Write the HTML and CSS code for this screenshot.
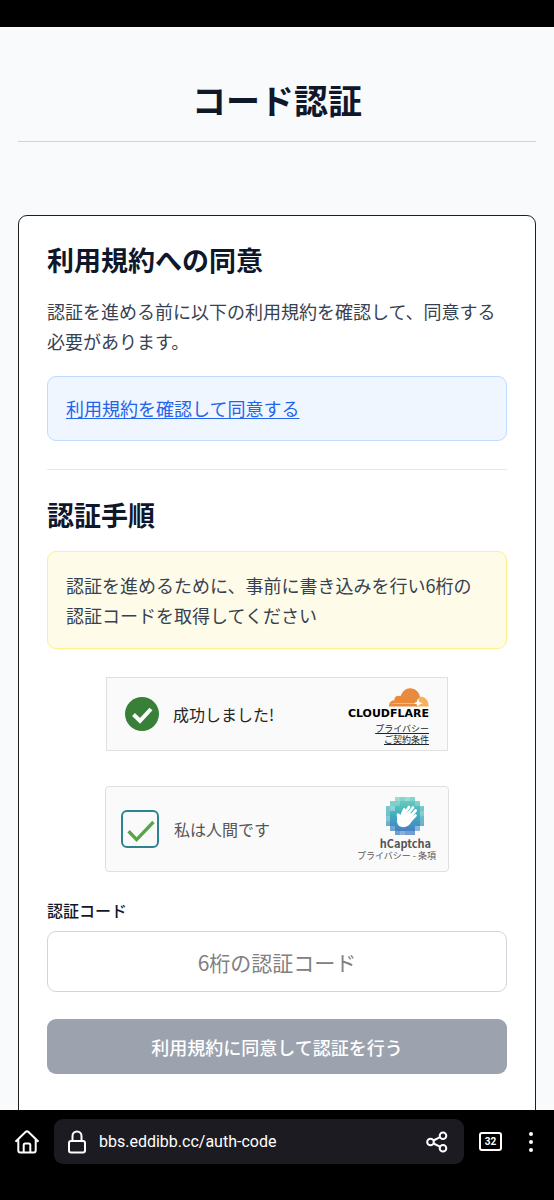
FILE: index.html
```html
<!DOCTYPE html>
<html lang="ja">
<head>
<meta charset="utf-8">
<meta name="viewport" content="width=device-width, initial-scale=1">
<title>コード認証</title>
<link rel="stylesheet" href="styles.css">
</head>
<body>
<div class="status-bar"></div>
<main class="page">
  <header class="page-header"><h1 class="page-title">コード認証</h1></header>
  <form class="card">
    <section class="terms">
      <h2 class="section-title">利用規約への同意</h2>
      <p class="text">認証を進める前に以下の利用規約を確認して、同意する必要があります。</p>
      <div class="notice notice-blue"><a class="terms-link" href="#">利用規約を確認して同意する</a></div>
    </section>
    <section class="steps">
      <h2 class="section-title">認証手順</h2>
      <p class="text notice notice-yellow">認証を進めるために、事前に書き込みを行い6桁の認証コードを取得してください</p>
      <div class="turnstile">
        <svg class="success-icon" viewBox="0 0 34 34" aria-hidden="true"><circle cx="17" cy="17" r="17" fill="#388038"/><path d="M8.5 17.5l6.500 6.300L26 12" fill="none" stroke="#fff" stroke-width="4"/></svg>
        <span class="turnstile-label">成功しました!</span>
        <div class="turnstile-brand">
          <svg class="cloud" viewBox="0 0 40 19" aria-hidden="true"><path d="M0 18.500c-.2-4 2-6.300 5.500-6.300-.8-3.400 3-5.700 6-4C13.500 3 17 .2 21 .2c5.500 0 9.500 4 10 9-3 2-3 5.500-1.500 9.300z" fill="#e98b3c"/><path d="M27.500 18.500c1.700-3 1.500-6 2.500-9.600 5-1.200 9.500 2 9.700 9.600z" fill="#f5b25d"/><path d="M8 14.900h19v.7H0z" fill="#fff" opacity=".8"/><path d="M29 10.500l1.300 3.400 3.500 1.300-3.500 1.300-1.300 2-1.400-2.200-3-1.100 3.100-1.300z" fill="#fff"/></svg>
          <span class="cloudflare-name">CLOUDFLARE</span>
          <a class="turnstile-link" href="#">プライバシー</a>
          <a class="turnstile-link" href="#">ご契約条件</a>
        </div>
      </div>
      <div class="hcaptcha">
        <input class="human-check" id="human" type="checkbox" checked>
        <label class="human-label" for="human">私は人間です</label>
        <div class="hcaptcha-brand">
          <svg class="hand" viewBox="0 0 40 40" aria-hidden="true">
            <defs><linearGradient id="sea" x1="0" y1="0" x2="0" y2="1"><stop offset="0" stop-color="#5bc9b9"/><stop offset=".5" stop-color="#35a6ba"/><stop offset="1" stop-color="#3d78bd"/></linearGradient></defs>
            <g fill="url(#sea)"><path opacity=".72" d="M10 1h20v4h5v5h4v20h-4v5h-5v4H10v-4H5v-5H1V10h4V5h5z"/><path opacity=".8" d="M15 5h15v5h5v20h-5v5H10v-5H5V15h5v-5h5z"/></g>
            <path d="M10 1h5v4h-5zM20 1h5v4h-5zM5 10h5v5H5zM1 20h4v5H1zM30 30h5v5h-5zM15 35h5v4h-5zM35 15h4v5h-4z" fill="#fff" opacity=".18"/>
            <path d="M12 20.500c-1-3 1-4.200 2.500-2.500l1.500 1.500 8-4 5.500 5.500-4.500 7c-5 5-12 4-13-2z" fill="#fff"/>
            <path d="M16 21l3.200-7.500M18 20l6-9M20.500 21l7.500-9.500M23.500 22.500l7.200-8M25 25l5.500-5.500" fill="none" stroke="#fff" stroke-width="2.700" stroke-linecap="round"/>
          </svg>
          <span class="hcaptcha-name">hCaptcha</span>
          <div class="hcaptcha-links"><a href="#">プライバシー</a> - <a href="#">条項</a></div>
        </div>
      </div>
      <label class="code-label" for="code">認証コード</label>
      <input class="code-input" id="code" type="text" inputmode="numeric" placeholder="6桁の認証コード">
      <button class="submit" type="submit" disabled>利用規約に同意して認証を行う</button>
    </section>
  </form>
</main>
<nav class="browser-bar" aria-label="ブラウザ">
  <button class="icon-button" type="button" aria-label="ホーム"><svg width="26" height="26" viewBox="0 0 26 26"><path d="M1.500 12.700L11.500 3q1.500-1.300 3 0l10 9.700M4.300 10.500v11q0 2 2 2h13.400q2 0 2-2v-11M9.700 23v-7q0-1.500 1.500-1.500h3.600q1.500 0 1.500 1.500v7"/></svg></button>
  <div class="address">
    <svg width="20" height="26" viewBox="0 0 20 26" aria-hidden="true"><rect x="2" y="12" width="16" height="11.500" rx="2"/><path d="M5.500 12V7a4.500 4.500 0 0 1 9 0v5"/></svg>
    <span class="url">bbs.eddibb.cc/auth-code</span>
    <button class="icon-button" type="button" aria-label="共有"><svg width="24" height="24" viewBox="0 0 24 24"><circle cx="5.500" cy="12" r="3.300"/><circle cx="18" cy="5.700" r="3.300"/><circle cx="18" cy="18.200" r="3.300"/><path d="M8.500 10.500l6.500-3.300M8.500 13.500l6.500 3.200"/></svg></button>
  </div>
  <button class="tabs" type="button">32</button>
  <button class="icon-button" type="button" aria-label="メニュー"><svg class="dots" width="6" height="22" viewBox="0 0 6 22"><circle cx="3" cy="3" r="2"/><circle cx="3" cy="11" r="2"/><circle cx="3" cy="19" r="2"/></svg></button>
</nav>
</body>
</html>
```
FILE: styles.css
```css
* { box-sizing: border-box; }
body {
  margin: 0;
  height: 100vh;
  display: grid;
  grid-template-rows: 27px minmax(0, 1fr) auto;
  background: #000;
  color: #0f172a;
  font-family: "Noto Sans CJK JP", "Noto Sans", sans-serif;
}
h1, h2, p { margin: 0; }
button, input { font-family: inherit; }
.page { overflow: hidden; background: #f9fafc; padding: 0 18px; }
.page-header { padding: 48px 0 17px; border-bottom: 1px solid #d1d5db; text-align: center; }
.page-title { font-size: 34px; line-height: 49px; font-weight: 700; }
.card {
  margin: 73px 0 36px;
  padding: 26px 28px 54px;
  background: #fff;
  border: 1px solid #1f1f1f;
  border-radius: 9px;
}
.terms { padding-bottom: 28px; border-bottom: 1px solid #e5e7eb; margin-bottom: 27px; }
.section-title { font-size: 27px; line-height: 36px; font-weight: 600; margin-bottom: 18px; }
.text { font-size: 18px; line-height: 30px; color: #374151; }
.notice { border: 1px solid; border-radius: 9px; padding: 18px; }
.notice-blue { margin-top: 20px; background: #eff6ff; border-color: #bfdbfe; font-size: 18px; line-height: 27px; }
.notice-yellow { background: #fefce8; border-color: #fef08a; }
.terms-link { color: #2563eb; text-underline-offset: 2px; }
.steps { display: flex; flex-direction: column; }
.turnstile, .hcaptcha {
  align-self: center;
  display: flex;
  align-items: center;
  background: #fafafa;
  border: 1px solid #e0e0e0;
  max-width: 100%;
}
.turnstile { width: 342px; height: 74px; margin-top: 28px; padding: 0 18px; gap: 14px; }
.success-icon { width: 34px; height: 34px; }
.turnstile-label { font-size: 16px; color: #232323; }
.turnstile-brand { margin-left: auto; padding-top: 4px; display: flex; flex-direction: column; align-items: flex-end; }
.cloud { width: 40px; height: 19px; }
.cloudflare-name { font: 700 11px/13px "DejaVu Sans", sans-serif; color: #000; }
.turnstile-link { font-size: 9px; line-height: 11px; color: #232323; text-underline-offset: 1px; }
.turnstile-link:first-of-type { margin-top: 3px; }
.hcaptcha { width: 344px; height: 86px; margin-top: 35px; padding: 0 12px 0 15px; border-radius: 4px; }
.human-check {
  appearance: none;
  display: grid;
  width: 38px;
  height: 38px;
  margin: 0 15px 0 0;
  border: 2px solid #2b8490;
  border-radius: 6px;
  background: #fafafa;
}
.human-check:checked::before {
  content: "";
  background: #58a449;
  clip-path: polygon(13% 60%, 20% 53%, 40% 74%, 86% 26%, 93% 33%, 40% 88%);
}
.human-label { font-size: 16px; color: #555; }
.hcaptcha-brand { margin-left: auto; display: grid; color: #555; }
.hand { width: 40px; height: 40px; justify-self: end; margin-right: 11px; }
.hcaptcha-name { justify-self: end; margin-right: 5px; font: 700 11px/14px "Noto Sans CJK JP", sans-serif; }
.hcaptcha-links { font-size: 9px; line-height: 12px; }
.hcaptcha-links a { color: inherit; text-decoration: none; }
.code-label { margin-top: 26px; font-size: 16px; line-height: 24px; font-weight: 500; }
.code-input {
  width: 100%;
  height: 61px;
  margin: 9px 0 27px;
  padding: 0 18px;
  border: 1px solid #d1d5db;
  border-radius: 9px;
  background: #fff;
  text-align: center;
  font-size: 21px;
}
.code-input::placeholder { color: #808080; }
.submit {
  height: 55px;
  border: 0;
  border-radius: 9px;
  background: #9ca3af;
  color: #fff;
  font-size: 18px;
  font-weight: 500;
}
.browser-bar {
  display: flex;
  align-items: center;
  padding: 9px 20px 36px 14px;
  background: #000;
  color: #fff;
}
.browser-bar svg { display: block; fill: none; stroke: #fff; stroke-width: 2; }
.browser-bar .dots { fill: #fff; stroke: none; }
.icon-button { border: 0; padding: 0; background: none; }
.address {
  flex: 1;
  display: flex;
  align-items: center;
  height: 45px;
  margin: 0 15px 0 14px;
  padding: 0 15px 0 13px;
  border-radius: 9px;
  background: #1c1b22;
}
.url { flex: 1; margin-left: 12px; font: 16px/24px Roboto, sans-serif; }
.browser-bar .tabs {
  width: 23px;
  height: 19px;
  margin-right: 26px;
  padding: 0;
  border: 2px solid #fff;
  border-radius: 3px;
  background: none;
  color: #fff;
  font: 700 10px/14px Roboto, sans-serif;
}
```
